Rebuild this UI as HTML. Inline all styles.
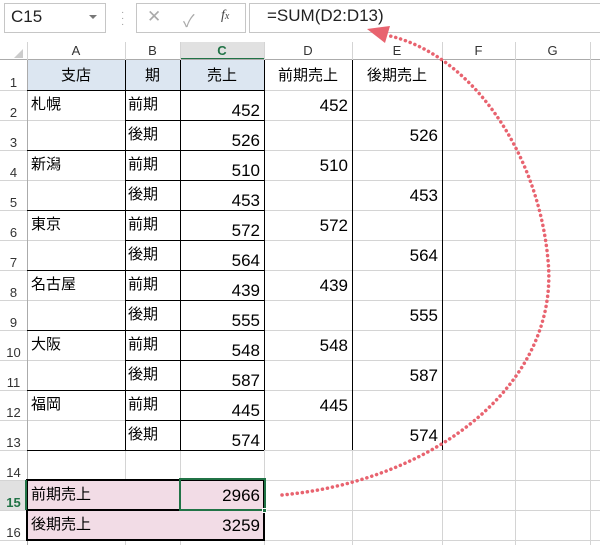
<!DOCTYPE html>
<html><head><meta charset="utf-8"><style>
*{margin:0;padding:0;box-sizing:border-box}
body{width:600px;height:545px;background:#fff;position:relative;overflow:hidden;font-family:"Liberation Sans","Noto Sans CJK JP",sans-serif;color:#000}
.a{position:absolute}
.h{position:absolute;height:1px;background:#d4d4d4}
.v{position:absolute;width:1px;background:#d4d4d4}
.bh{position:absolute;height:1px;background:#000}
.bv{position:absolute;width:1px;background:#000}
.rn{position:absolute;left:0;width:27px;text-align:center;font-size:13px;color:#333}
.ch{position:absolute;top:42px;height:18px;text-align:center;font-size:13px;color:#333;line-height:18px}
.t{position:absolute;font-size:15px;line-height:18px}
.n{position:absolute;font-size:17px;line-height:20px;text-align:right}
</style></head><body>
<div class="a" style="left:4px;top:3px;width:102px;height:30px;border:1px solid #c6c6c6"></div>
<div class="a" style="left:11px;top:7px;font-size:17px;color:#222">C15</div>
<div class="a" style="left:89px;top:15px;width:0;height:0;border-left:4px solid transparent;border-right:4px solid transparent;border-top:4px solid #777"></div>
<div class="a" style="left:121px;top:10px;font-size:10px;color:#999;line-height:6px">·<br>·<br>·</div>
<div class="a" style="left:136px;top:3px;width:110px;height:30px;border:1px solid #c6c6c6"></div>
<div class="a" style="left:147px;top:7px;font-size:17px;color:#aaa">✕</div>
<div class="a" style="left:183px;top:7px;font-size:17px;color:#aaa">✓</div>
<div class="a" style="left:221px;top:8px;font-size:14px;font-style:italic;font-family:'Liberation Serif',serif;color:#444">f<span style="font-size:10px">x</span></div>
<div class="a" style="left:249px;top:3px;width:360px;height:30px;border:1px solid #c6c6c6"></div>
<div class="a" style="left:267px;top:6px;font-size:17px;color:#222">=SUM(D2:D13)</div>
<div class="a" style="left:180px;top:42px;width:84px;height:18px;background:#e1e1e1;border-bottom:2px solid #217346"></div>
<div class="a" style="left:14px;top:49px;width:0;height:0;border-left:9px solid transparent;border-bottom:9px solid #ccc"></div>
<div class="h" style="left:0;top:59px;width:600px;background:#ababab"></div>
<div class="ch" style="left:27px;width:98px">A</div>
<div class="ch" style="left:125px;width:55px">B</div>
<div class="ch" style="left:180px;width:84px;color:#217346;font-weight:bold">C</div>
<div class="ch" style="left:264px;width:88px">D</div>
<div class="ch" style="left:352px;width:90px">E</div>
<div class="ch" style="left:442px;width:73px">F</div>
<div class="ch" style="left:515px;width:75px">G</div>
<div class="v" style="left:27px;top:42px;height:18px"></div>
<div class="v" style="left:125px;top:42px;height:18px"></div>
<div class="v" style="left:180px;top:42px;height:18px"></div>
<div class="v" style="left:264px;top:42px;height:18px"></div>
<div class="v" style="left:352px;top:42px;height:18px"></div>
<div class="v" style="left:442px;top:42px;height:18px"></div>
<div class="v" style="left:515px;top:42px;height:18px"></div>
<div class="v" style="left:590px;top:42px;height:18px"></div>
<div class="a" style="left:27px;top:60px;width:237px;height:30px;background:#dce6f1"></div>
<div class="a" style="left:0;top:480px;width:27px;height:30px;background:#e1e1e1"></div>
<div class="h" style="left:0;top:90px;width:600px"></div>
<div class="h" style="left:0;top:120px;width:600px"></div>
<div class="h" style="left:0;top:150px;width:600px"></div>
<div class="h" style="left:0;top:180px;width:600px"></div>
<div class="h" style="left:0;top:210px;width:600px"></div>
<div class="h" style="left:0;top:240px;width:600px"></div>
<div class="h" style="left:0;top:270px;width:600px"></div>
<div class="h" style="left:0;top:300px;width:600px"></div>
<div class="h" style="left:0;top:330px;width:600px"></div>
<div class="h" style="left:0;top:360px;width:600px"></div>
<div class="h" style="left:0;top:390px;width:600px"></div>
<div class="h" style="left:0;top:420px;width:600px"></div>
<div class="h" style="left:0;top:450px;width:600px"></div>
<div class="h" style="left:0;top:480px;width:600px"></div>
<div class="h" style="left:0;top:510px;width:600px"></div>
<div class="h" style="left:0;top:540px;width:600px"></div>
<div class="v" style="left:27px;top:60px;height:485px;background:#ababab"></div>
<div class="v" style="left:125px;top:60px;height:485px"></div>
<div class="v" style="left:180px;top:60px;height:485px"></div>
<div class="v" style="left:264px;top:60px;height:485px"></div>
<div class="v" style="left:352px;top:60px;height:485px"></div>
<div class="v" style="left:442px;top:60px;height:485px"></div>
<div class="v" style="left:515px;top:60px;height:485px"></div>
<div class="v" style="left:590px;top:60px;height:485px"></div>
<!-- pink fill covers gridlines -->
<div class="a" style="left:27px;top:480px;width:237px;height:60px;background:#f2dce6"></div>
<div class="bv" style="left:125px;top:60px;height:390px"></div>
<div class="bv" style="left:180px;top:60px;height:390px"></div>
<div class="bv" style="left:264px;top:60px;height:390px"></div>
<div class="bv" style="left:352px;top:60px;height:390px"></div>
<div class="bv" style="left:442px;top:60px;height:390px"></div>
<div class="bh" style="left:27px;top:90px;width:237px"></div>
<div class="bh" style="left:125px;top:120px;width:139px"></div>
<div class="bh" style="left:27px;top:150px;width:237px"></div>
<div class="bh" style="left:125px;top:180px;width:139px"></div>
<div class="bh" style="left:27px;top:210px;width:237px"></div>
<div class="bh" style="left:125px;top:240px;width:139px"></div>
<div class="bh" style="left:27px;top:270px;width:237px"></div>
<div class="bh" style="left:125px;top:300px;width:139px"></div>
<div class="bh" style="left:27px;top:330px;width:237px"></div>
<div class="bh" style="left:125px;top:360px;width:139px"></div>
<div class="bh" style="left:27px;top:390px;width:237px"></div>
<div class="bh" style="left:125px;top:420px;width:139px"></div>
<div class="bh" style="left:27px;top:450px;width:237px"></div>
<div class="a" style="left:26px;top:479px;width:239px;height:62px;border:2px solid #000"></div>
<div class="bh" style="left:27px;top:509px;width:237px;height:2px"></div>
<div class="a" style="left:179px;top:478px;width:87px;height:33px;border:2px solid #217346"></div>
<div class="a" style="left:262px;top:508px;width:5px;height:5px;background:#217346;border:1px solid #fff"></div>
<div class="a" style="left:25px;top:480px;width:2px;height:30px;background:#217346"></div>
<div class="rn" style="top:75px">1</div>
<div class="rn" style="top:105px">2</div>
<div class="rn" style="top:135px">3</div>
<div class="rn" style="top:165px">4</div>
<div class="rn" style="top:195px">5</div>
<div class="rn" style="top:225px">6</div>
<div class="rn" style="top:255px">7</div>
<div class="rn" style="top:285px">8</div>
<div class="rn" style="top:315px">9</div>
<div class="rn" style="top:345px">10</div>
<div class="rn" style="top:375px">11</div>
<div class="rn" style="top:405px">12</div>
<div class="rn" style="top:435px">13</div>
<div class="rn" style="top:465px">14</div>
<div class="rn" style="top:495px;color:#217346;font-weight:bold">15</div>
<div class="rn" style="top:525px">16</div>
<div class="t" style="left:27px;top:67px;width:98px;text-align:center">支店</div>
<div class="t" style="left:125px;top:67px;width:55px;text-align:center">期</div>
<div class="t" style="left:180px;top:67px;width:84px;text-align:center">売上</div>
<div class="t" style="left:264px;top:67px;width:88px;text-align:center">前期売上</div>
<div class="t" style="left:352px;top:67px;width:90px;text-align:center">後期売上</div>
<div class="t" style="left:31px;top:96px">札幌</div>
<div class="t" style="left:31px;top:156px">新潟</div>
<div class="t" style="left:31px;top:216px">東京</div>
<div class="t" style="left:31px;top:276px">名古屋</div>
<div class="t" style="left:31px;top:336px">大阪</div>
<div class="t" style="left:31px;top:396px">福岡</div>
<div class="t" style="left:128px;top:96px">前期</div>
<div class="t" style="left:128px;top:126px">後期</div>
<div class="t" style="left:128px;top:156px">前期</div>
<div class="t" style="left:128px;top:186px">後期</div>
<div class="t" style="left:128px;top:216px">前期</div>
<div class="t" style="left:128px;top:246px">後期</div>
<div class="t" style="left:128px;top:276px">前期</div>
<div class="t" style="left:128px;top:306px">後期</div>
<div class="t" style="left:128px;top:336px">前期</div>
<div class="t" style="left:128px;top:366px">後期</div>
<div class="t" style="left:128px;top:396px">前期</div>
<div class="t" style="left:128px;top:426px">後期</div>
<div class="n" style="left:180px;width:80px;top:101px">452</div>
<div class="n" style="left:180px;width:80px;top:131px">526</div>
<div class="n" style="left:180px;width:80px;top:161px">510</div>
<div class="n" style="left:180px;width:80px;top:191px">453</div>
<div class="n" style="left:180px;width:80px;top:221px">572</div>
<div class="n" style="left:180px;width:80px;top:251px">564</div>
<div class="n" style="left:180px;width:80px;top:281px">439</div>
<div class="n" style="left:180px;width:80px;top:311px">555</div>
<div class="n" style="left:180px;width:80px;top:341px">548</div>
<div class="n" style="left:180px;width:80px;top:371px">587</div>
<div class="n" style="left:180px;width:80px;top:401px">445</div>
<div class="n" style="left:180px;width:80px;top:431px">574</div>
<div class="n" style="left:264px;width:84px;top:96px">452</div>
<div class="n" style="left:264px;width:84px;top:156px">510</div>
<div class="n" style="left:264px;width:84px;top:216px">572</div>
<div class="n" style="left:264px;width:84px;top:276px">439</div>
<div class="n" style="left:264px;width:84px;top:336px">548</div>
<div class="n" style="left:264px;width:84px;top:396px">445</div>
<div class="n" style="left:352px;width:86px;top:126px">526</div>
<div class="n" style="left:352px;width:86px;top:186px">453</div>
<div class="n" style="left:352px;width:86px;top:246px">564</div>
<div class="n" style="left:352px;width:86px;top:306px">555</div>
<div class="n" style="left:352px;width:86px;top:366px">587</div>
<div class="n" style="left:352px;width:86px;top:426px">574</div>
<div class="t" style="left:31px;top:486px">前期売上</div>
<div class="t" style="left:31px;top:516px">後期売上</div>
<div class="n" style="left:180px;width:80px;top:486px">2966</div>
<div class="n" style="left:180px;width:80px;top:516px">3259</div>
<svg class="a" style="left:0;top:0" width="600" height="545" viewBox="0 0 600 545">
<path d="M282,495 C440,480 560,380 548,260 C538,150 470,55 390,36" fill="none" stroke="#e8636f" stroke-width="3.5" stroke-dasharray="0.1 5" stroke-linecap="round"/>
<path d="M367,29 L390,26 L385,43 Z" fill="#e8636f"/>
</svg>
</body></html>
